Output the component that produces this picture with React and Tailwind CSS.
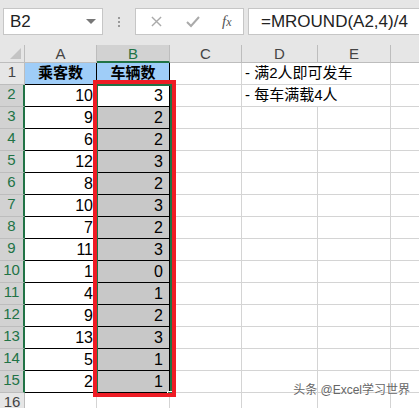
import React from 'react'

const A = [10, 9, 6, 12, 8, 10, 7, 11, 1, 4, 9, 13, 5, 2]
const B = [3, 2, 2, 3, 2, 3, 2, 3, 0, 1, 2, 3, 1, 1]
const font = { fontFamily: '"Liberation Sans", "Noto Sans CJK SC", sans-serif' }

function RowHead({ n, sel }) {
  return (
    <div
      className={`w-[25px] shrink-0 h-full flex items-end justify-center pb-[1px] text-[15px] border-b border-[#bdbdbd] ${
        sel ? 'bg-[#d2d2d2] text-[#217346] border-r-2 border-r-[#217346]' : 'bg-[#e6e6e6] text-[#444] border-r border-r-[#bdbdbd]'
      }`}
    >
      {n}
    </div>
  )
}

function Gray({ w }) {
  return <div className={`${w} shrink-0 h-full border-r border-b border-[#d4d4d4]`} />
}

export default function App() {
  return (
    <div className='relative w-[419px] h-[408px] overflow-hidden bg-white' style={font}>
      {/* formula bar */}
      <div className='h-[45px] bg-[#e6e6e6] flex items-start pt-[8px] pl-[3px]'>
        <div className='w-[100px] h-[27px] bg-white border border-[#c6c6c6] flex items-center justify-between pl-[6px] pr-[6px] text-[17px] text-[#222]'>
          <span>B2</span>
          <span className='w-0 h-0 border-l-[5px] border-r-[5px] border-t-[5px] border-l-transparent border-r-transparent border-t-[#777]' />
        </div>
        <div className='w-[32px] h-[27px] flex flex-col items-center justify-center gap-[2px]'>
          <span className='w-[2px] h-[2px] bg-[#999]' />
          <span className='w-[2px] h-[2px] bg-[#999]' />
          <span className='w-[2px] h-[2px] bg-[#999]' />
        </div>
        <div className='w-[109px] h-[27px] bg-white border border-[#c6c6c6] flex items-center pl-[15px]'>
          <svg width='11' height='11' viewBox='0 0 12 12'>
            <path d='M1 1L11 11M11 1L1 11' stroke='#aaa' strokeWidth='1.5' />
          </svg>
          <svg width='14' height='12' viewBox='0 0 14 12' className='ml-[24px]'>
            <path d='M1 6L5 10L13 1' stroke='#aaa' strokeWidth='2' fill='none' />
          </svg>
          <span className='ml-[22px] text-[15px] italic text-[#555] leading-none' style={{ fontFamily: '"Liberation Serif", serif' }}>
            f<span className='text-[12px]'>x</span>
          </span>
        </div>
        <div className='ml-[4px] flex-1 h-[27px] bg-white border border-[#c6c6c6] border-r-0 flex items-center pl-[12px] text-[17px] text-[#222]'>
          =MROUND(A2,4)/4
        </div>
      </div>

      {/* column headers */}
      <div className='h-[18px] flex bg-[#e6e6e6] text-[15px] text-[#444] leading-[18px]'>
        <div className='w-[25px] shrink-0 h-full border-r border-b border-[#bdbdbd] flex items-end justify-end pr-[3px] pb-[3px]'>
          <svg width='11' height='11' viewBox='0 0 11 11'>
            <path d='M11 0L11 11L0 11Z' fill='#c4c4c4' />
          </svg>
        </div>
        <div className='w-[72px] shrink-0 text-center border-r border-b border-[#bdbdbd]'>A</div>
        <div className='w-[73px] shrink-0 text-center bg-[#d2d2d2] text-[#217346] border-r border-[#bdbdbd] border-b-2 border-b-[#217346] leading-[17px]'>B</div>
        <div className='w-[72px] shrink-0 text-center border-r border-b border-[#bdbdbd]'>C</div>
        <div className='w-[76px] shrink-0 text-center border-r border-b border-[#bdbdbd]'>D</div>
        <div className='w-[73px] shrink-0 text-center border-r border-b border-[#bdbdbd]'>E</div>
        <div className='flex-1 border-b border-[#bdbdbd]' />
      </div>

      {/* row 1 */}
      <div className='h-[22px] flex text-[15px]'>
        <RowHead n={1} />
        <div className='w-[72px] shrink-0 h-full bg-[#9fcdf8] border-r border-b border-black flex items-center justify-center font-bold text-black'>乘客数</div>
        <div className='w-[73px] shrink-0 h-full bg-[#9fcdf8] border-r border-b border-black flex items-center justify-center font-bold text-black'>车辆数</div>
        <Gray w='w-[72px]' />
        <div className='w-[76px] shrink-0 h-full border-b border-[#d4d4d4] flex items-center pl-[3px] text-black whitespace-nowrap'>- 满2人即可发车</div>
        <Gray w='w-[73px]' />
        <div className='flex-1 h-full border-b border-[#d4d4d4]' />
      </div>

      {A.map((a, i) => (
        <div key={i} className='h-[22px] flex text-[16px]'>
          <RowHead n={i + 2} sel />
          <div className='w-[72px] shrink-0 h-full bg-white border-r border-b border-black flex items-center justify-end pr-[3px] text-black'>{a}</div>
          <div
            className={`w-[73px] shrink-0 h-full border-r border-b border-black flex items-center justify-end pr-[6px] text-black ${
              i === 0 ? 'bg-white' : 'bg-[#c8c8c8]'
            }`}
          >
            {B[i]}
          </div>
          <Gray w='w-[72px]' />
          {i === 0 ? (
            <div className='w-[76px] shrink-0 h-full border-b border-[#d4d4d4] flex items-center pl-[3px] text-[15px] text-black whitespace-nowrap'>- 每车满载4人</div>
          ) : (
            <Gray w='w-[76px]' />
          )}
          <Gray w='w-[73px]' />
          <div className='flex-1 h-full border-b border-[#d4d4d4]' />
        </div>
      ))}

      {/* row 16 */}
      <div className='h-[22px] flex text-[15px]'>
        <RowHead n={16} />
        <Gray w='w-[72px]' />
        <Gray w='w-[73px]' />
        <Gray w='w-[72px]' />
        <Gray w='w-[76px]' />
        <Gray w='w-[73px]' />
      </div>

      {/* selection border */}
      <div className='absolute left-[96px] top-[84px] w-[76px] h-[312px] border-2 border-[#217346]' />
      <div className='absolute left-[167px] top-[391px] w-[6px] h-[6px] bg-[#217346] border border-white' />
      {/* red annotation */}
      <div className='absolute left-[93px] top-[80px] w-[83px] h-[317px] border-[4px] border-[#ee1c25]' />

      {/* watermark */}
      <div className='absolute right-[9px] top-[381px] text-[12px] text-[#666] whitespace-nowrap' style={{ textShadow: '0 0 1px #fff' }}>
        头条 @Excel学习世界
      </div>
    </div>
  )
}
